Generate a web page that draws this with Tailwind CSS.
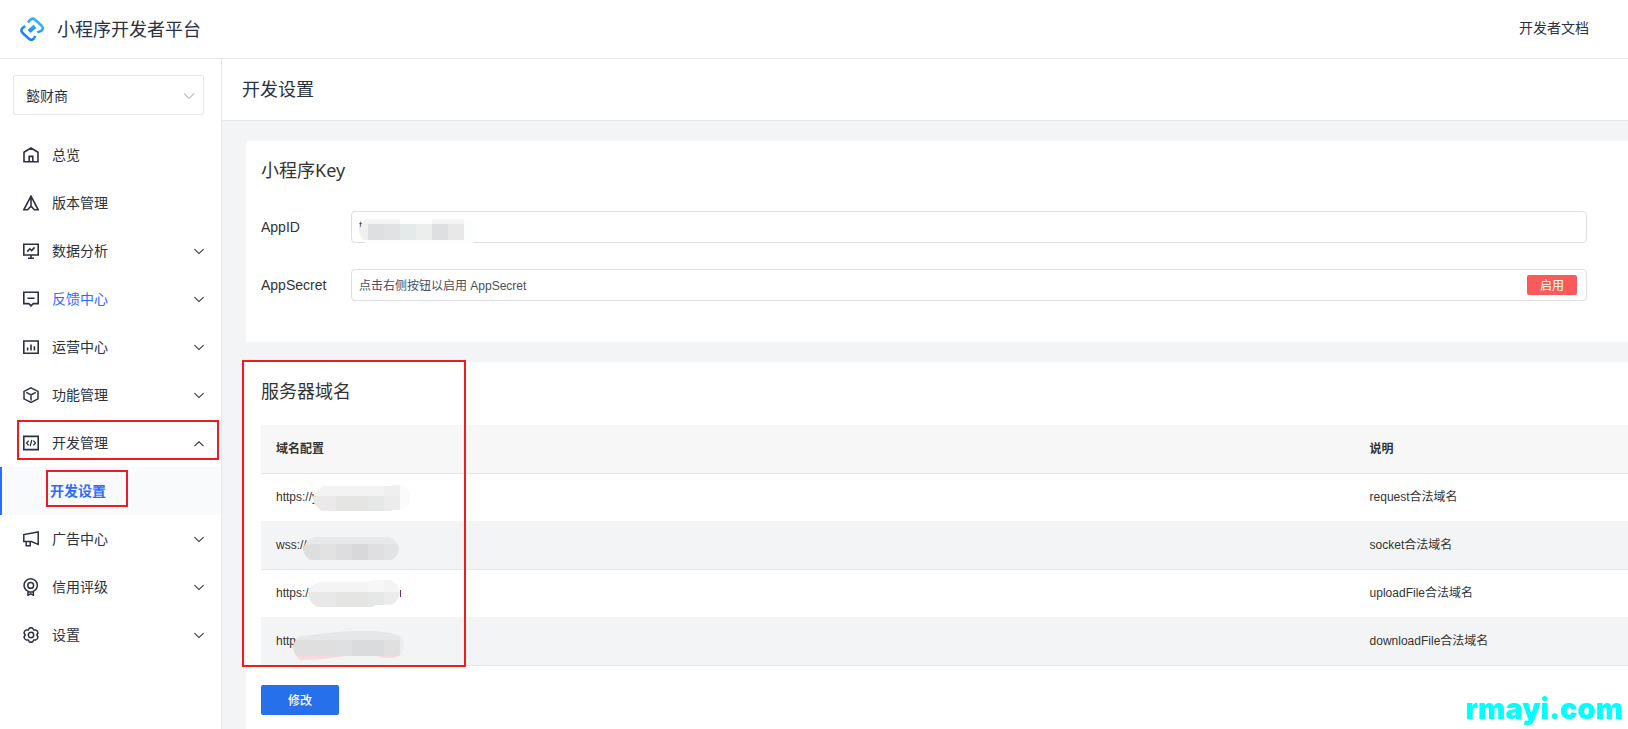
<!DOCTYPE html>
<html lang="zh-CN">
  <head>
    <title>小程序开发者平台</title>
    <meta charset="utf-8" />
    <meta name="viewport" content="width=device-width, initial-scale=1" />
    <script src="https://cdn.jsdelivr.net/npm/@tailwindcss/browser@4"></script>
  </head>
  <body
    class="flex min-h-screen flex-col overflow-x-hidden bg-white font-['Liberation_Sans','Noto_Sans_CJK_SC',sans-serif] text-sm text-[#2a3140]"
  >
    <header
      class="flex h-[59px] shrink-0 items-center justify-between border-b border-[#e5e6e9] pr-[39px] pl-5"
    >
      <a href="#" class="flex items-center gap-[13px]">
        <svg class="size-6" viewBox="0 0 24 24" fill="none" stroke="url(#brand)" stroke-width="2.5">
          <defs>
            <linearGradient id="brand" gradientUnits="userSpaceOnUse" x1="4" y1="22" x2="18" y2="2">
              <stop offset="0" stop-color="#1677ff" />
              <stop offset="1" stop-color="#2bb8ff" />
            </linearGradient>
          </defs>
          <path d="M8 5.6 9.8 3.2Q12.3 .3 15 2.6L21.4 8.5Q24 11.3 21.6 13.6L17.4 15.4" />
          <path d="M5.2 9 2.6 11Q.2 13.4 2.6 16L8.8 21.6Q11.3 24 13.8 21.6L15.2 19" />
          <path d="M9 14.4 15 9.4" stroke-width="4" />
        </svg>
        <span class="pt-px text-lg">小程序开发者平台</span>
      </a>
      <a href="#" class="-mt-0.5 leading-5">开发者文档</a>
    </header>

    <div class="flex grow">
      <aside class="w-[222px] shrink-0 border-r border-[#e5e6e9] pt-4">
        <div class="relative mr-[17px] ml-[13px]">
          <select
            aria-label="小程序"
            class="h-10 w-full appearance-none rounded-xs border border-[#e5e6e9] bg-white pt-0.5 pl-3 text-sm"
          >
            <option>懿财商</option>
          </select>
          <svg class="pointer-events-none absolute top-[18px] right-[9px] h-1.5 w-3" viewBox="0 0 12 6" fill="none" stroke="#c0c4cc" stroke-width="1.2">
            <path d="m1 .5 5 5 5-5" />
          </svg>
        </div>

        <nav class="mt-4">
          <a href="#" class="flex h-12 items-center gap-[13px] pr-4 pl-[23px]">
            <svg class="size-4" viewBox="0 0 16 16" fill="none" stroke="currentColor" stroke-width="1.6">
              <path d="M1 5.2 8 1l7 4.2v9.6H1zM6.2 14.8V9.4h3.6v5.4" />
            </svg>
            总览
          </a>
          <a href="#" class="flex h-12 items-center gap-[13px] pr-4 pl-[23px]">
            <svg class="size-4" viewBox="0 0 16 16" fill="none" stroke="currentColor" stroke-width="1.6">
              <path d="M8 1.2 .8 14.8H4.6L8 11.2l3.4 3.6h3.8zM8 1.6v10" />
            </svg>
            版本管理
          </a>
          <button type="button" class="flex h-12 w-full items-center gap-[13px] pr-4 pl-[23px] text-left">
            <svg class="size-4" viewBox="0 0 16 16" fill="none" stroke="currentColor" stroke-width="1.6">
              <path d="M.8 1.2h14.4v10.8H.8zM8 12v3M5 15.2h6M4.2 8.6l2.6-2.8 1.8 1.8 3-3.2" />
            </svg>
            <span class="grow">数据分析</span>
            <svg class="h-2 w-3" viewBox="0 0 12 8" fill="none" stroke="currentColor" stroke-width="1.1">
              <path d="m1.4 2.2 4.6 4.4 4.6-4.4" />
            </svg>
          </button>
          <button type="button" class="flex h-12 w-full items-center gap-[13px] pr-4 pl-[23px] text-left">
            <svg class="size-4" viewBox="0 0 16 16" fill="none" stroke="currentColor" stroke-width="1.6">
              <path d="M.8 1.2h14.4v11.4h-5L8 14.8l-2.2-2.2h-5zM4.4 7.2h7.2" />
            </svg>
            <span class="grow text-[#2f6bff]">反馈中心</span>
            <svg class="h-2 w-3" viewBox="0 0 12 8" fill="none" stroke="currentColor" stroke-width="1.1">
              <path d="m1.4 2.2 4.6 4.4 4.6-4.4" />
            </svg>
          </button>
          <button type="button" class="flex h-12 w-full items-center gap-[13px] pr-4 pl-[23px] text-left">
            <svg class="size-4" viewBox="0 0 16 16" fill="none" stroke="currentColor" stroke-width="1.6">
              <path d="M.8 2h14.4v12.2H.8zM4.6 8.6v3M8 5.4v6.2M11.4 7.2v4.4" />
            </svg>
            <span class="grow">运营中心</span>
            <svg class="h-2 w-3" viewBox="0 0 12 8" fill="none" stroke="currentColor" stroke-width="1.1">
              <path d="m1.4 2.2 4.6 4.4 4.6-4.4" />
            </svg>
          </button>
          <button type="button" class="flex h-12 w-full items-center gap-[13px] pr-4 pl-[23px] text-left">
            <svg class="size-4" viewBox="0 0 16 16" fill="none" stroke="currentColor" stroke-width="1.5">
              <path d="m8 .8 7 3.6v7.4l-7 3.6-7-3.6V4.4zM3.2 5.4 8 8l4.8-2.6M8 8v5.4" />
            </svg>
            <span class="grow">功能管理</span>
            <svg class="h-2 w-3" viewBox="0 0 12 8" fill="none" stroke="currentColor" stroke-width="1.1">
              <path d="m1.4 2.2 4.6 4.4 4.6-4.4" />
            </svg>
          </button>
          <div class="relative">
            <button type="button" aria-expanded="true" class="flex h-12 w-full items-center gap-[13px] pr-4 pl-[23px] text-left">
              <svg class="size-4" viewBox="0 0 16 16" fill="none" stroke="currentColor" stroke-width="1.6">
                <path d="M.8 1.4h14.4v13.2H.8z" />
                <path d="M5.6 5.6 3.6 8l2 2.4M10.4 5.6l2 2.4-2 2.4M8.8 4.8l-1.6 6.4" stroke-width="1.3" />
              </svg>
              <span class="grow">开发管理</span>
              <svg class="h-2 w-3" viewBox="0 0 12 8" fill="none" stroke="currentColor" stroke-width="1.1">
                <path d="m1.4 7.2 4.6-4.4 4.6 4.4" />
              </svg>
            </button>
            <div class="pointer-events-none absolute top-px left-[17px] h-10 w-[202px] border-2 border-[#ed1c24]"></div>
          </div>
          <div class="relative">
            <a href="#" class="flex h-12 items-center border-l-2 border-[#2f6bff] bg-[#f9fafc] pl-12 font-bold text-[#2f6bff]">开发设置</a>
            <div class="pointer-events-none absolute top-[3px] left-[46px] h-[37px] w-[82px] border-2 border-[#ed1c24]"></div>
          </div>
          <button type="button" class="flex h-12 w-full items-center gap-[13px] pr-4 pl-[23px] text-left">
            <svg class="size-4" viewBox="0 0 16 16" fill="none" stroke="currentColor" stroke-width="1.5">
              <path d="M15.2 1v12.4L8.4 10.6H.8V3.6zM3.2 10.6v4.2h4v-4.2" />
            </svg>
            <span class="grow">广告中心</span>
            <svg class="h-2 w-3" viewBox="0 0 12 8" fill="none" stroke="currentColor" stroke-width="1.1">
              <path d="m1.4 2.2 4.6 4.4 4.6-4.4" />
            </svg>
          </button>
          <button type="button" class="flex h-12 w-full items-center gap-[13px] pr-4 pl-[23px] text-left">
            <svg class="h-[18px] w-4" viewBox="0 0 16 18" fill="none" stroke="currentColor" stroke-width="1.5">
              <path d="M5 13.4a6.6 6.6 0 1 1 5.4 0M5 12.6v4.6l2.7-1.4 2.7 1.4v-4.6M5 14h5.4" />
              <circle cx="7.7" cy="7.4" r="2.9" />
            </svg>
            <span class="grow">信用评级</span>
            <svg class="h-2 w-3" viewBox="0 0 12 8" fill="none" stroke="currentColor" stroke-width="1.1">
              <path d="m1.4 2.2 4.6 4.4 4.6-4.4" />
            </svg>
          </button>
          <button type="button" class="flex h-12 w-full items-center gap-[13px] pr-4 pl-[23px] text-left">
            <svg class="size-4" viewBox="0 0 16 16" fill="none" stroke="currentColor" stroke-width="1.5" stroke-linejoin="round">
              <path d="M6.2 1.3Q8 0 9.8 1.3L10.6 3l2-.1Q14.8 3.6 15 6L13.8 8l1.2 2Q14.8 12.4 12.6 13.1l-2-.1-.8 1.7Q8 16 6.2 14.7L5.4 13l-2 .1Q1.2 12.4 1 10L2.2 8 1 6Q1.2 3.6 3.4 2.9l2 .1z" />
              <circle cx="8" cy="8" r="2.7" />
            </svg>
            <span class="grow">设置</span>
            <svg class="h-2 w-3" viewBox="0 0 12 8" fill="none" stroke="currentColor" stroke-width="1.1">
              <path d="m1.4 2.2 4.6 4.4 4.6-4.4" />
            </svg>
          </button>
        </nav>
      </aside>

      <main class="flex min-w-0 grow flex-col bg-[#f3f4f6]">
        <div class="flex h-[62px] shrink-0 items-center border-b border-[#e5e6e9] bg-white pl-5">
          <h1 class="text-lg">开发设置</h1>
        </div>

        <div class="flex grow flex-col gap-5 pt-5 pl-6 text-[#333]">
          <section class="bg-white pt-[15px] pr-[41px] pb-[41px] pl-[15px]">
            <h2 class="font-['Noto_Sans','Noto_Sans_CJK_SC',sans-serif] text-lg leading-7">小程序Key</h2>
            <div class="mt-[27px] flex items-center">
              <label for="app-id" class="w-[90px] shrink-0">AppID</label>
              <div class="relative grow">
                <input id="app-id" type="text" value="t" class="block h-8 w-full rounded-sm border border-[#dcdee2] px-[7px] pb-0.5 text-xs text-[#495060]" />
                <!-- masked id -->
                <svg class="absolute top-2 left-2 h-[25px] w-[119px]" viewBox="0 0 119 25">
                  <clipPath id="mask-id"><path d="M6 0H107Q119 2 119 12.5T113 24V25H6V22Q0 18 0 11Z" /></clipPath>
                  <g clip-path="url(#mask-id)">
                    <path fill="#fcfdfd" d="M0 0h119v25H0z" />
                    <path fill="#f3f4f4" d="M0 0h41v5H0zM73 0h32v5H73z" />
                    <path fill="#f0f0f0" d="M0 5h9v16H0z" />
                    <path fill="#dedfe0" d="M9 5h16v16H9zM73 5h16v16H73z" />
                    <path fill="#e1e2e3" d="M25 5h16v16H25z" />
                    <path fill="#e4eaea" d="M41 5h16v16H41z" />
                    <path fill="#ebeeed" d="M57 5h16v16H57z" />
                    <path fill="#e8e8e8" d="M89 5h16v16H89z" />
                  </g>
                </svg>
              </div>
            </div>
            <div class="mt-[26px] flex items-center">
              <label for="app-secret" class="w-[90px] shrink-0">AppSecret</label>
              <div class="relative grow">
                <input id="app-secret" type="text" value="点击右侧按钮以启用 AppSecret" class="block h-8 w-full rounded-sm border border-[#dcdee2] px-[7px] pb-0.5 text-xs text-[#495060]" />
                <button type="button" class="absolute top-1.5 right-2.5 h-5 w-[50px] rounded-xs bg-[#fa5a5a] pt-px text-xs leading-5 text-white">启用</button>
              </div>
            </div>
          </section>

          <section class="relative grow bg-white pt-4 pb-3 pl-[15px]">
            <h2 class="text-lg leading-7">服务器域名</h2>
            <table class="mt-[19px] w-full table-fixed border-separate border-spacing-0 text-left text-xs">
              <thead>
                <tr class="h-[49px] bg-[#f7f7f7]">
                  <th class="w-4/5 border-b border-[#e5e6e9] pl-[15px]">域名配置</th>
                  <th class="border-b border-[#e5e6e9] pl-[15px]">说明</th>
                </tr>
              </thead>
              <tbody>
                <tr class="h-12">
                  <td class="relative border-b border-[#f3f4f6] pb-0.5 pl-[15px]">
                    https://y
                    <svg class="absolute top-[11px] left-[52px] h-[26px] w-[97px]" viewBox="0 0 97 26">
                      <clipPath id="mask-request"><path d="M11 1H79V0H87Q97 4 97 13T87 25H79V26H9Q0 21 0 12Q3 4 11 1Z" /></clipPath>
                      <g clip-path="url(#mask-request)">
                        <path fill="#f3f3f3" d="M0 0h97v11H0z" />
                        <path fill="#ebe9ea" d="M0 11h23v15H0z" />
                        <path fill="#e5e6e4" d="M23 11h32v15H23z" />
                        <path fill="#e6e8e7" d="M55 11h16v15H55z" />
                        <path fill="#ececec" d="M71 11h16v15H71z" />
                        <path fill="#efefef" d="M71 0h16v11H71z" />
                        <path fill="#fbfbfc" d="M87 0h10v26H87z" />
                      </g>
                    </svg>
                  </td>
                  <td class="border-b border-[#f3f4f6] pb-0.5 pl-[15px]">request合法域名</td>
                </tr>
                <tr class="h-12 bg-[#f3f4f6]">
                  <td class="relative border-b border-[#e5e6e9] pb-0.5 pl-[15px]">
                    wss://
                    <svg class="absolute top-[15px] left-[42px] h-[23px] w-24" viewBox="0 0 96 23">
                      <clipPath id="mask-socket"><path d="M12 0H86Q96 4 96 13Q94 21 88 23H7Q0 18 0 11Q3 3 12 0Z" /></clipPath>
                      <g clip-path="url(#mask-socket)">
                        <path fill="#e8e8e8" d="M0 0h96v7H0z" />
                        <path fill="#dedede" d="M0 7h17v16H0z" />
                        <path fill="#e2e2e2" d="M17 7h16v16H17z" />
                        <path fill="#dddddf" d="M33 7h16v16H33z" />
                        <path fill="#d8d8da" d="M49 7h16v16H49z" />
                        <path fill="#dfdfe1" d="M65 7h16v16H65z" />
                        <path fill="#e2e3e5" d="M81 7h15v16H81z" />
                      </g>
                    </svg>
                  </td>
                  <td class="border-b border-[#e5e6e9] pb-0.5 pl-[15px]">socket合法域名</td>
                </tr>
                <tr class="h-12">
                  <td class="relative border-b border-[#f3f4f6] pb-0.5 pl-[15px]">
                    https://
                    <svg class="absolute top-2.5 left-[47px] h-[27px] w-[94px]" viewBox="0 0 94 27">
                      <clipPath id="mask-upload"><path d="M12 2H60V1H66V0H82Q92 4 92 13Q90 22 83 25H68L64 27H9Q0 22 0 13Q3 4 12 2Z" /></clipPath>
                      <path fill="#6b2f5e" d="M92 10h1v7h-1z" />
                      <g clip-path="url(#mask-upload)">
                        <path fill="#f3f4f3" d="M0 0h92v12H0z" />
                        <path fill="#f7f7f7" d="M60 0h16v12H60z" />
                        <path fill="#e9e8e8" d="M0 12h28v15H0z" />
                        <path fill="#e5e6e4" d="M28 12h32v15H28z" />
                        <path fill="#e5e8e7" d="M60 12h16v15H60z" />
                        <path fill="#ececec" d="M76 12h16v15H76z" />
                      </g>
                    </svg>
                  </td>
                  <td class="border-b border-[#f3f4f6] pb-0.5 pl-[15px]">uploadFile合法域名</td>
                </tr>
                <tr class="h-12 bg-[#f3f4f6]">
                  <td class="relative border-b border-[#e5e6e9] pb-0.5 pl-[15px]">
                    http
                    <svg class="absolute top-[13px] left-8 h-[29px] w-[111px]" viewBox="0 0 111 29">
                      <clipPath id="mask-download"><path d="M8 5 26 3 44 1 56 0H82L98 2 107 5Q111 9 111 15Q110 21 106 25L100 27H92L84 25H52L30 28 12 29H7Q0 23 0 15Q2 8 8 5Z" /></clipPath>
                      <g clip-path="url(#mask-download)">
                        <path fill="#e6e7e8" d="M0 0h111v9H0z" />
                        <path fill="#dfdfdf" d="M0 9h43v16H0z" />
                        <path fill="#dfe0e2" d="M43 9h16v16H43z" />
                        <path fill="#dadbdc" d="M59 9h32v16H59z" />
                        <path fill="#dfe0df" d="M91 9h16v16H91z" />
                        <path fill="#ecedef" d="M107 0h4v29h-4z" />
                        <path fill="#f7dada" d="M0 25h107v4H0z" />
                      </g>
                    </svg>
                  </td>
                  <td class="border-b border-[#e5e6e9] pb-0.5 pl-[15px]">downloadFile合法域名</td>
                </tr>
              </tbody>
            </table>
            <button type="button" class="mt-[19px] h-[30px] w-[78px] rounded-xs bg-[#2770eb] pt-px text-xs font-medium text-white">修改</button>
            <div class="pointer-events-none absolute -top-0.5 -left-1 h-[307px] w-56 border-2 border-[#ed1c24]"></div>
          </section>
        </div>
      </main>
    </div>

    <div class="pointer-events-none fixed right-[5px] bottom-1 font-['Inter',sans-serif] text-[29px] leading-8 font-black text-[#0ff]">rmayi.com</div>
  </body>
</html>
